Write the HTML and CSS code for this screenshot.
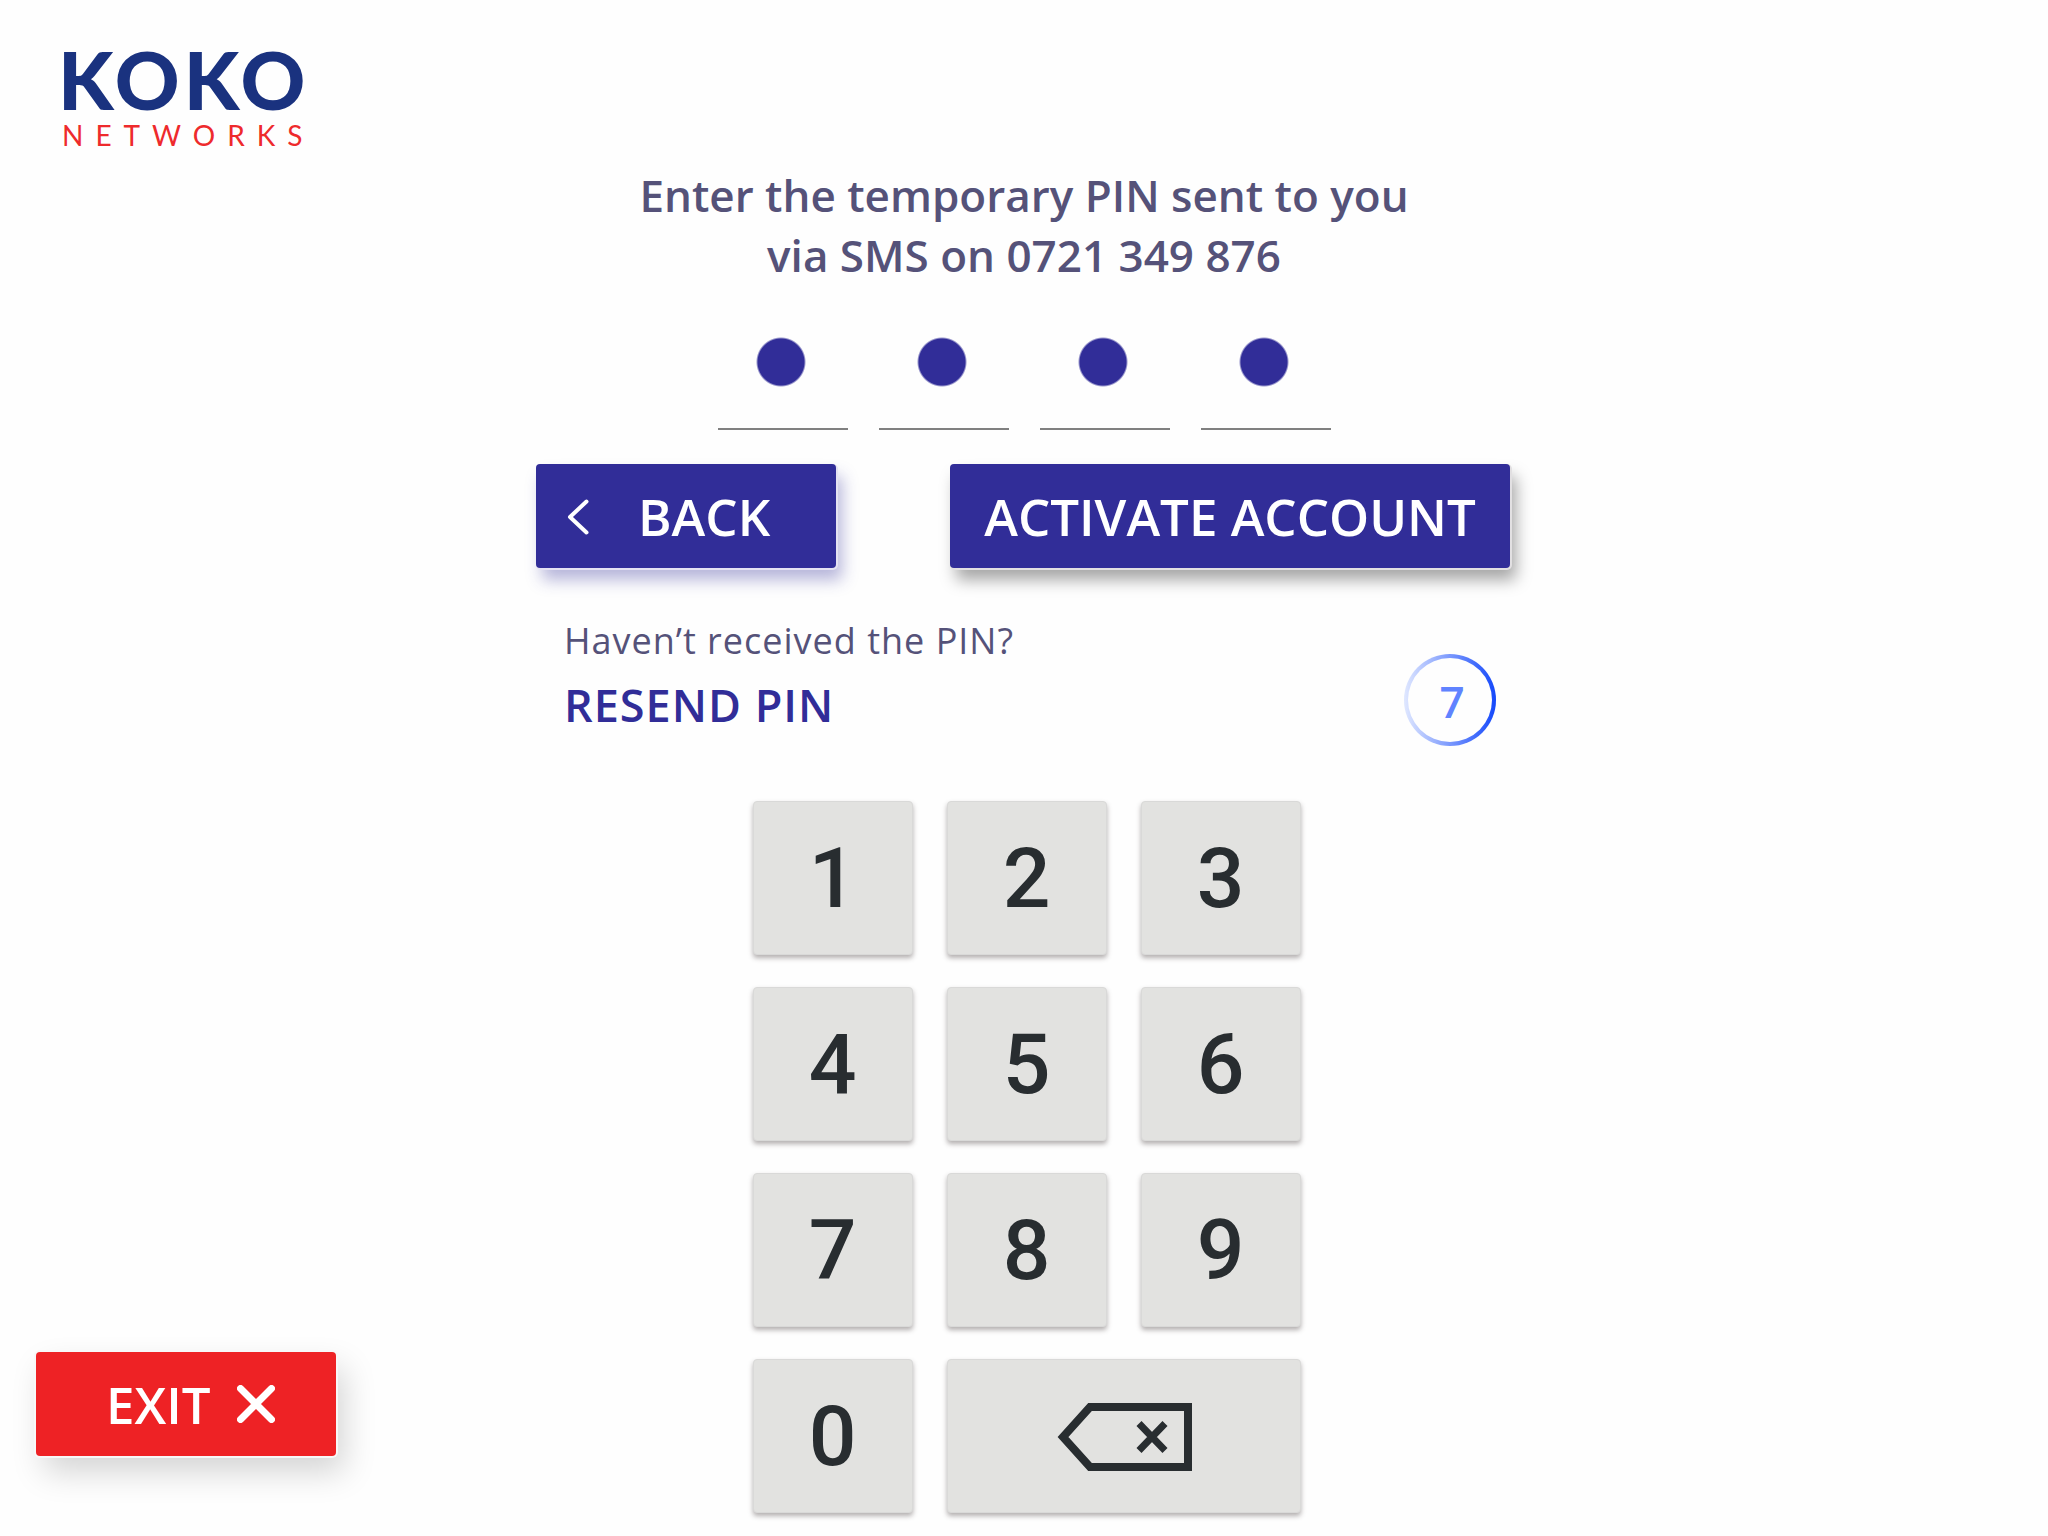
FILE: index.html
```html
<!DOCTYPE html>
<html lang="en">
<head>
  <meta charset="utf-8">
  <meta name="viewport" content="width=device-width, initial-scale=1">
  <title>KOKO Networks – Activate account</title>
  <link rel="stylesheet" href="styles.css">
</head>
<body>
  <div class="page">
    <header class="logo">
      <span class="logo-name">KOKO</span>
      <span class="logo-sub">NETWORKS</span>
    </header>

    <main class="content">
      <h1 class="title">Enter the temporary PIN sent to you<br>via SMS on 0721 349 876</h1>

      <div class="pin" role="group" aria-label="Temporary PIN">
        <input class="pin-digit" type="password" maxlength="1" value="1" aria-label="PIN digit 1">
        <input class="pin-digit" type="password" maxlength="1" value="1" aria-label="PIN digit 2">
        <input class="pin-digit" type="password" maxlength="1" value="1" aria-label="PIN digit 3">
        <input class="pin-digit" type="password" maxlength="1" value="1" aria-label="PIN digit 4">
      </div>

      <div class="actions">
        <button class="btn btn-back" type="button">
          <svg class="icon-back" viewBox="0 0 24 38" aria-hidden="true"><path d="M20.500 3.500 4 19l16.500 15.500"/></svg>
          BACK
        </button>
        <button class="btn btn-activate" type="button">ACTIVATE ACCOUNT</button>
      </div>

      <div class="resend">
        <div class="resend-text">
          <p class="resend-hint">Haven’t received the PIN?</p>
          <button class="resend-link" type="button">RESEND PIN</button>
        </div>
        <div class="timer" role="timer">7</div>
      </div>

      <div class="keypad">
        <button class="key" type="button">1</button>
        <button class="key" type="button">2</button>
        <button class="key" type="button">3</button>
        <button class="key" type="button">4</button>
        <button class="key" type="button">5</button>
        <button class="key" type="button">6</button>
        <button class="key" type="button">7</button>
        <button class="key" type="button">8</button>
        <button class="key" type="button">9</button>
        <button class="key" type="button">0</button>
        <button class="key key-wide" type="button" aria-label="Delete">
          <svg class="icon-delete" viewBox="0 0 136 70" aria-hidden="true">
            <path class="icon-delete-body" d="M34 5H132V65H34L7 35Z"/>
            <path class="icon-delete-cross" d="M83 21.500 109 48.500M109 21.500 83 48.500"/>
          </svg>
        </button>
      </div>
    </main>

    <button class="btn btn-exit" type="button">
      EXIT
      <svg class="icon-close" viewBox="0 0 38 38" aria-hidden="true"><path d="M3.500 3.500l31 31M34.500 3.500l-31 31"/></svg>
    </button>
  </div>
</body>
</html>
```
FILE: styles.css
```css
* {
  box-sizing: border-box;
}

body {
  margin: 0;
  background: #fefefe;
  font-family: "Open Sans", "Noto Sans", sans-serif;
  color: #555279;
}

button {
  border: 0;
  padding: 0;
  background: none;
  font: inherit;
  color: inherit;
  cursor: pointer;
}

svg {
  fill: none;
  stroke: currentColor;
}

.page {
  display: grid;
  grid-template-columns: 1fr minmax(0, 976px) 1fr;
  grid-template-rows: auto 1fr;
  min-height: 100vh;
}

/* Logo */
.logo {
  grid-area: 1 / 1;
  display: flex;
  flex-direction: column;
  gap: 2px;
  padding: 39px 0 0 58px;
  font-family: Lato, sans-serif;
}

.logo-name {
  font-size: 80px;
  font-weight: 900;
  line-height: 80px;
  letter-spacing: 4px;
  color: #1a327f;
}

.logo-sub {
  padding-left: 4px;
  font-size: 28px;
  line-height: 28px;
  letter-spacing: 12px;
  color: #ee2a2c;
}

/* Main column */
.content {
  grid-area: 1 / 2 / 3 / 3;
  display: flex;
  flex-direction: column;
  padding: 165px 0 23px;
}

.title {
  margin: 0;
  font-size: 44px;
  font-weight: 600;
  line-height: 60px;
  text-align: center;
}

.pin {
  display: flex;
  justify-content: center;
  gap: 31px;
  margin-top: 45px;
}

.pin-digit {
  width: 130px;
  height: 100px;
  padding: 0;
  border: 0;
  border-bottom: 2px solid #808080;
  outline: 0;
  background: radial-gradient(circle at 63px 32px, #312d98 23px, transparent 25px);
  color: transparent;
}

.actions {
  display: flex;
  justify-content: space-between;
  margin-top: 34px;
  padding-right: 2px;
}

.btn {
  display: flex;
  align-items: center;
  height: 104px;
  border-radius: 4px;
  font-size: 51px;
  font-weight: 600;
  color: #fff;
}

.btn-back {
  width: 300px;
  padding-left: 30px;
  gap: 48px;
  background: #312d98;
  box-shadow: 1px 1px 0 1px #e4e2f2, 6px 12px 16px rgba(49, 45, 152, 0.35);
}

.icon-back {
  width: 24px;
  height: 38px;
  margin-top: 2px;
  stroke-width: 4;
  stroke-linecap: round;
  stroke-linejoin: round;
}

.btn-activate {
  width: 560px;
  justify-content: center;
  background: #312d98;
  box-shadow: 1px 1px 0 1px #e2e0e2, 6px 12px 16px rgba(0, 0, 0, 0.35);
}

/* Resend */
.resend {
  display: flex;
  justify-content: space-between;
  align-items: flex-end;
  height: 129px;
  margin-top: 49px;
  padding: 0 16px 0 28px;
}

.resend-text {
  display: flex;
  flex-direction: column;
  align-items: flex-start;
  align-self: flex-start;
  gap: 8px;
}

.resend-hint {
  margin: 0;
  font-size: 36px;
  line-height: 48px;
  letter-spacing: 1px;
}

.resend-link {
  font-size: 45px;
  font-weight: 600;
  line-height: 64px;
  letter-spacing: 1px;
  color: #312d98;
}

.timer {
  width: 92px;
  height: 92px;
  padding-left: 4px;
  border: 4px solid transparent;
  border-radius: 50%;
  background:
    linear-gradient(#fefefe, #fefefe) padding-box,
    linear-gradient(90deg, #e0e8ff, #1448fb) border-box;
  font-size: 44px;
  font-weight: 600;
  line-height: 86px;
  text-align: center;
  color: #6083ff;
}

/* Keypad */
.keypad {
  display: grid;
  grid-template-columns: repeat(3, 160px);
  grid-auto-rows: 154px;
  gap: 32px 34px;
  align-self: center;
  margin: 55px 0 0 5px;
}

.key {
  display: flex;
  align-items: center;
  justify-content: center;
  padding-top: 2px;
  border: 1px solid #d9d9d8;
  border-radius: 4px;
  background: #e2e2e0;
  box-shadow: 0 3px 5px rgba(40, 30, 30, 0.35);
  font-family: Roboto, sans-serif;
  font-size: 84px;
  font-weight: 500;
  line-height: 96px;
  color: #282d30;
}

.key-wide {
  grid-column: span 2;
}

.icon-delete {
  width: 136px;
  height: 70px;
}

.icon-delete-body {
  stroke-width: 8;
}

.icon-delete-cross {
  stroke-width: 7;
}

/* Exit */
.btn-exit {
  grid-area: 2 / 1;
  align-self: end;
  width: 300px;
  margin: 0 0 80px 36px;
  padding-left: 70px;
  gap: 26px;
  background: #ee2225;
  box-shadow: 0 0 0 2px #f8f8f8, 8px 16px 32px rgba(0, 0, 0, 0.17);
}

.icon-close {
  width: 38px;
  height: 38px;
  stroke-width: 7;
  stroke-linecap: round;
}
```
